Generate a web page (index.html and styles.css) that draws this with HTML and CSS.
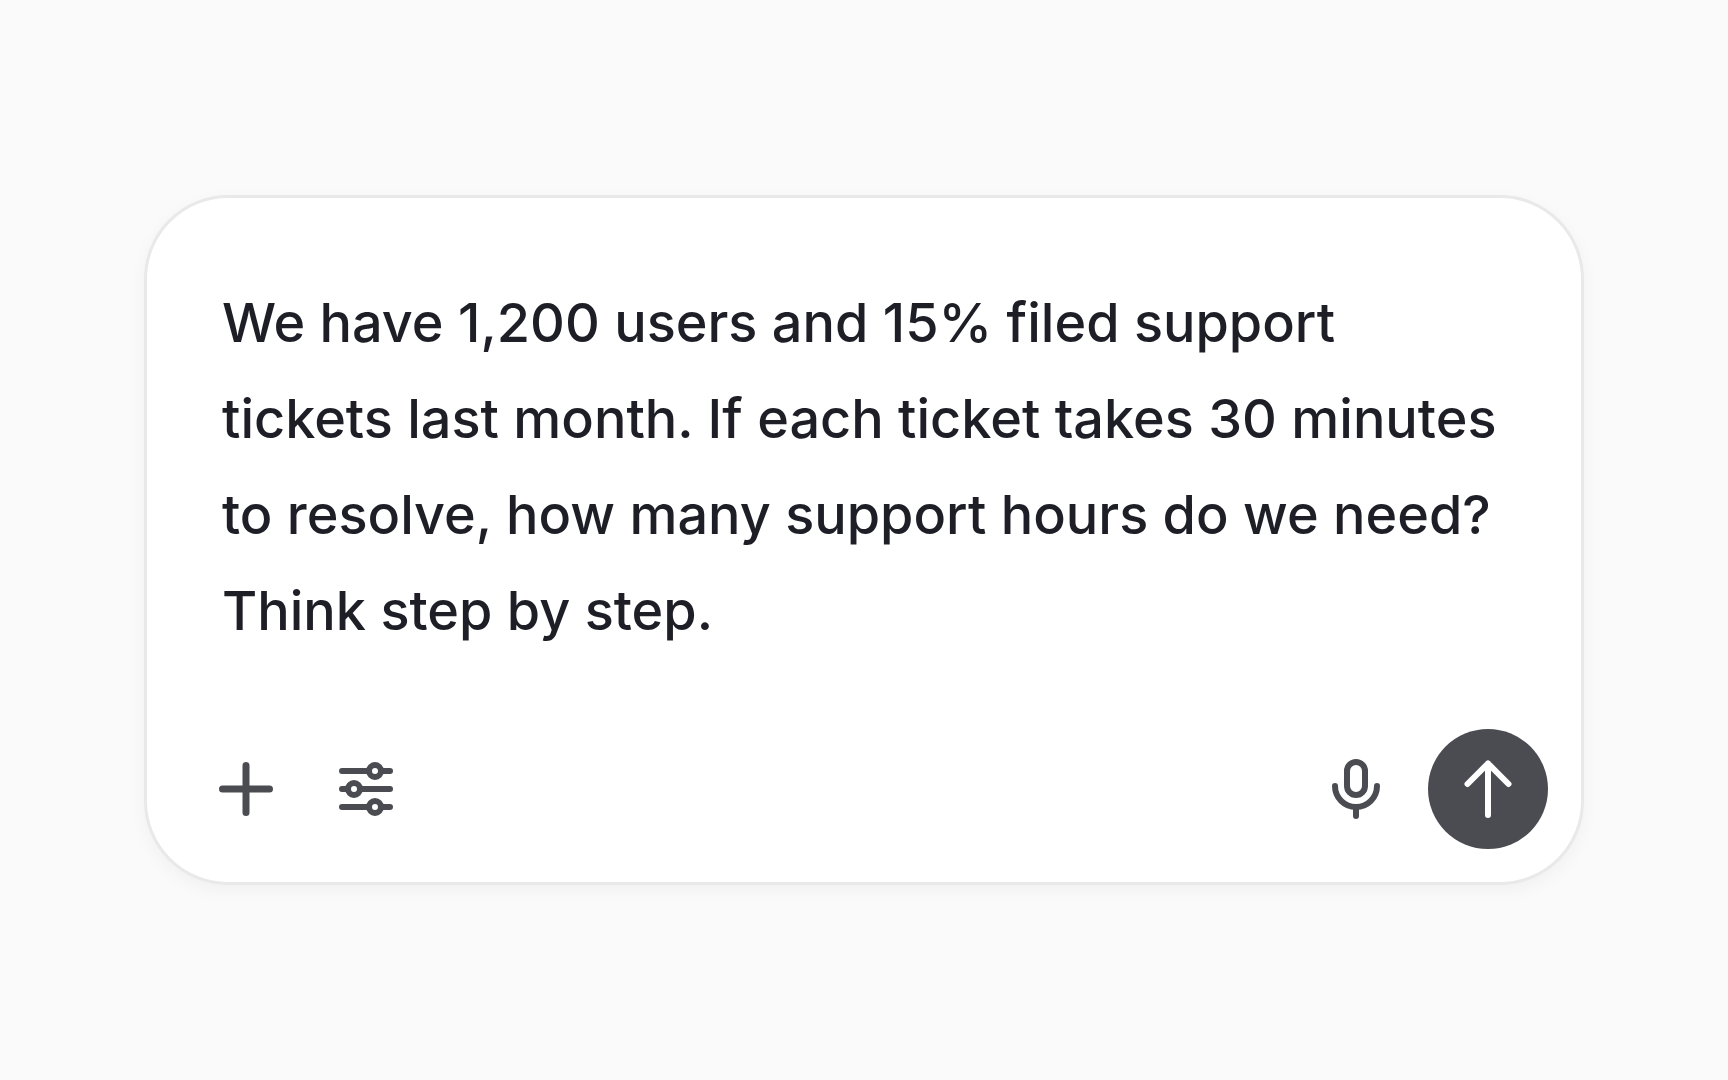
FILE: index.html
```html
<!DOCTYPE html>
<html lang="en">
  <head>
    <meta charset="UTF-8" />
    <meta name="viewport" content="width=device-width, initial-scale=1.0" />
    <title>Prompt</title>
    <link rel="stylesheet" href="styles.css">
  </head>
  <body>
    <main class="main">
      <form class="composer">
        <textarea class="prompt" rows="4" aria-label="Message" spellcheck="false">We have 1,200 users and 15% filed support tickets last month. If each ticket takes 30 minutes to resolve, how many support hours do we need? Think step by step.</textarea>
        <div class="toolbar">
          <div class="tools">
            <button type="button" class="btn" aria-label="Add attachment">
              <svg class="icon icon-plus" viewBox="0 0 72 72">
                <path d="M36 12.5v47M12.5 36h47" />
              </svg>
            </button>
            <button type="button" class="btn" aria-label="Settings">
              <svg class="icon" viewBox="0 0 72 72">
                <path d="M12 18h27M51 18h9M12 36h6M30 36h30M12 54h27M51 54h9" />
                <circle cx="45" cy="18" r="6" />
                <circle cx="24" cy="36" r="6" />
                <circle cx="45" cy="54" r="6" />
              </svg>
            </button>
          </div>
          <div class="tools tools-end">
            <button type="button" class="btn" aria-label="Dictate">
              <svg class="icon" viewBox="0 0 72 72">
                <rect x="27" y="9" width="18" height="33" rx="9" />
                <path d="M15 33a21 21 0 0 0 42 0M36 54v9" />
              </svg>
            </button>
            <button type="submit" class="btn send" aria-label="Send">
              <svg class="icon" viewBox="0 0 72 72">
                <path d="M36 62V10.500M15.500 31 36 10.500 56.500 31" />
              </svg>
            </button>
          </div>
        </div>
      </form>
    </main>
  </body>
</html>
```
FILE: styles.css
```css
* {
  box-sizing: border-box;
}

body {
  margin: 0;
  background-color: #fafafa;
  font-family: Inter, "Liberation Sans", sans-serif;
}

.main {
  display: flex;
  justify-content: center;
  align-items: center;
  min-height: 100vh;
  padding: 48px 144px;
}

.composer {
  display: flex;
  flex-direction: column;
  gap: 70px;
  width: 100%;
  max-width: 1440px;
  padding: 77px 33px 33px;
  background-color: #fff;
  border: 3px solid #e9e9e9;
  border-radius: 84px;
  box-shadow: 0 6px 18px rgba(0, 0, 0, 0.04);
}

.prompt {
  display: block;
  margin: 0 42px;
  padding: 0;
  border: 0;
  outline: none;
  resize: none;
  overflow: hidden;
  background: none;
  color: #1e1e27;
  font-family: inherit;
  font-size: 54px;
  font-weight: 500;
  font-optical-sizing: none;
  line-height: 96px;
}

.toolbar,
.tools {
  display: flex;
}
.toolbar {
  justify-content: space-between;
  padding-left: 6px;
}
.tools-end {
  gap: 12px;
}

.btn {
  display: flex;
  justify-content: center;
  align-items: center;
  width: 120px;
  height: 120px;
  padding: 0;
  border: 0;
  border-radius: 50%;
  background: none;
  color: #4b4c51;
  cursor: pointer;
}
.send {
  background-color: #4b4c51;
  color: #fff;
}

.icon {
  width: 72px;
  height: 72px;
  fill: none;
  stroke: currentColor;
  stroke-width: 6px;
  stroke-linecap: round;
  stroke-linejoin: round;
}
.icon-plus {
  stroke-width: 7px;
}
```
